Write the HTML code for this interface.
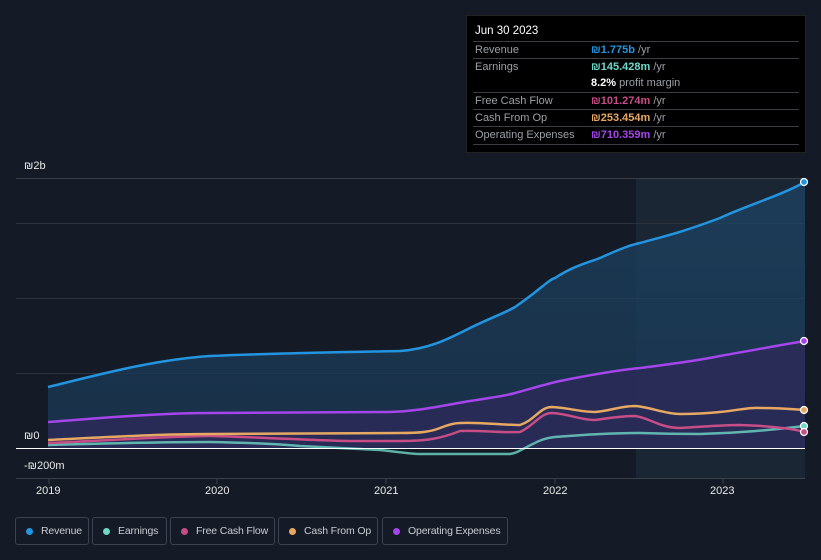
<!DOCTYPE html>
<html><head><meta charset="utf-8"><style>
body{margin:0;background:#151b26;width:821px;height:560px;overflow:hidden;font-family:"Liberation Sans",sans-serif;position:relative}
.tip{position:absolute;left:466px;top:15px;width:340px;height:138px;background:#000;border:1px solid #222;box-sizing:border-box;font-size:11px;color:#9aa0a6}
.tip .h{color:#fff;font-size:11.5px;padding:9px 0 0 8px;height:16px}
.row{position:absolute;left:6px;right:6px;height:17px;border-top:1px solid #3a3d42;line-height:17px;white-space:nowrap}
.row span{position:absolute;left:2px}.row b{position:absolute;left:118px;font-weight:bold}
.row i{font-style:normal;color:#9aa0a6;font-weight:normal}
.lbl{position:absolute;color:#e8e8e8;font-size:11px;white-space:nowrap}
.leg{position:absolute;top:517px;height:28px;border:1px solid #3d4250;border-radius:3px;box-sizing:border-box;color:#c8ccd2;font-size:10.5px;letter-spacing:-0.15px;line-height:26px;white-space:nowrap}
.leg:before{content:"";position:absolute;left:10px;top:10px;width:7px;height:7px;border-radius:50%;background:var(--c)}
.leg span{position:absolute;left:25px}
</style></head><body>
<svg width="821" height="560" style="position:absolute;left:0;top:0">
<defs>
<linearGradient id="g1" x1="0" y1="0" x2="0" y2="1"><stop offset="0" stop-color="#1d4a6e" stop-opacity=".6"/><stop offset="1" stop-color="#1a3550" stop-opacity=".8"/></linearGradient>
</defs>
<rect x="636" y="178" width="169" height="300" fill="#1a2633"/>
<g stroke="#2c323c" stroke-width="1">
<line x1="16" y1="178.5" x2="805" y2="178.5" stroke="#3a404a"/>
<line x1="16" y1="223.5" x2="805" y2="223.5"/>
<line x1="16" y1="298.5" x2="805" y2="298.5"/>
<line x1="16" y1="373.5" x2="805" y2="373.5"/>
<line x1="16" y1="478.5" x2="805" y2="478.5" stroke="#3a404a"/>
</g>
<path d="M48,387 C90,377 150,360 210,356 C280,353 350,352 400,351 C430,349 450,338 470,328 C490,318 505,313 515,307 C540,290 548,280 555,278 C575,265 590,262 600,258 C620,249 630,245 640,243 C665,236 680,233 720,218 C745,206 780,196 805,182 L805,448 L48,448Z" fill="url(#g1)"/>
<path d="M48,422 C100,418 160,413 210,413 L390,412 C420,411 440,406 470,401 C495,397 505,396 515,393 C540,386 550,383 560,381 C600,373 620,370 640,368 C670,364 690,362 720,356 C760,349 780,345 805,341 L805,448 L48,448Z" fill="#2c2a58" opacity=".85"/>
<g fill="none" stroke-width="2.5" stroke-linejoin="round">
<path d="M48,445 C120,443 180,442 210,442 C260,443 290,445 300,446 C340,448 360,449 380,450 C400,452 410,454 420,454 L510,454 C518,453 520,450 525,448 C540,440 545,438 555,437 C580,435 610,433 640,433 C670,434 680,434 700,434 C740,433 770,430 805,426" stroke="#6fd8c8" opacity=".8"/>
<path d="M48,443 C120,440 170,436 210,436 C260,437 320,441 350,441 L400,441 C425,441 440,439 460,431 C480,430 500,433 520,432 C535,425 540,413 552,413 C570,414 580,420 595,420 C610,418 620,416 635,416 C650,418 660,428 680,428 C700,427 720,425 740,425 C770,426 790,428 805,432" stroke="#c64d86"/>
<path d="M48,440 C110,437 160,434 210,434 L400,433 C420,433 430,432 440,428 C450,424 455,423 460,423 C480,422 500,425 520,425 C535,420 540,407 552,407 C570,408 580,412 595,412 C610,411 620,406 635,406 C650,407 665,414 680,414 C700,414 710,413 720,412 C740,410 750,407 760,408 C780,408 790,409 805,410" stroke="#e7a863"/>
<path d="M48,422 C100,418 160,413 210,413 L390,412 C420,411 440,406 470,401 C495,397 505,396 515,393 C540,386 550,383 560,381 C600,373 620,370 640,368 C670,364 690,362 720,356 C760,349 780,345 805,341" stroke="#a545ec"/>
<path d="M48,387 C90,377 150,360 210,356 C280,353 350,352 400,351 C430,349 450,338 470,328 C490,318 505,313 515,307 C540,290 548,280 555,278 C575,265 590,262 600,258 C620,249 630,245 640,243 C665,236 680,233 720,218 C745,206 780,196 805,182" stroke="#2394e0"/>
</g>
<line x1="16" y1="448.5" x2="805" y2="448.5" stroke="#fff" stroke-width="1"/>
<g stroke="#fff" stroke-width="1.2">
<circle cx="804" cy="182" r="3.5" fill="#2394e0"/><circle cx="804" cy="341" r="3.5" fill="#a545ec"/>
<circle cx="804" cy="410" r="3.5" fill="#e7a863"/><circle cx="804" cy="426" r="3.5" fill="#6fd8c8"/>
<circle cx="804" cy="432" r="3.5" fill="#c64d86"/>
</g>
<g stroke="#3a404a"><line x1="49" y1="479" x2="49" y2="484"/><line x1="217" y1="479" x2="217" y2="484"/><line x1="386" y1="479" x2="386" y2="484"/><line x1="555" y1="479" x2="555" y2="484"/><line x1="723" y1="479" x2="723" y2="484"/></g>
</svg>
<div class="lbl" style="left:24px;top:160px">₪2b</div>
<div class="lbl" style="left:24px;top:430px">₪0</div>
<div class="lbl" style="left:24px;top:460px">-₪200m</div>
<div class="lbl" style="left:36px;top:485px">2019</div>
<div class="lbl" style="left:205px;top:485px">2020</div>
<div class="lbl" style="left:374px;top:485px">2021</div>
<div class="lbl" style="left:543px;top:485px">2022</div>
<div class="lbl" style="left:710px;top:485px">2023</div>
<div class="tip"><div class="h">Jun 30 2023</div>
<div class="row" style="top:25px"><span>Revenue</span><b style="color:#2394e0">₪1.775b <i>/yr</i></b></div>
<div class="row" style="top:42px"><span>Earnings</span><b style="color:#6fd8c8">₪145.428m <i>/yr</i></b></div>
<div class="row" style="top:59px;border-top:none"><b style="color:#fff">8.2% <i>profit margin</i></b></div>
<div class="row" style="top:76px"><span>Free Cash Flow</span><b style="color:#c64d86">₪101.274m <i>/yr</i></b></div>
<div class="row" style="top:93px"><span>Cash From Op</span><b style="color:#e7a863">₪253.454m <i>/yr</i></b></div>
<div class="row" style="top:110px"><span>Operating Expenses</span><b style="color:#a545ec">₪710.359m <i>/yr</i></b></div>
<div class="row" style="top:128px;height:1px"></div>
</div>
<div class="leg" style="left:15px;width:74px;--c:#2394e0"><span>Revenue</span></div>
<div class="leg" style="left:92px;width:75px;--c:#6fd8c8"><span>Earnings</span></div>
<div class="leg" style="left:170px;width:105px;--c:#c64d86"><span>Free Cash Flow</span></div>
<div class="leg" style="left:278px;width:100px;--c:#e7a863"><span>Cash From Op</span></div>
<div class="leg" style="left:382px;width:126px;--c:#a545ec"><span>Operating Expenses</span></div>
</body></html>
